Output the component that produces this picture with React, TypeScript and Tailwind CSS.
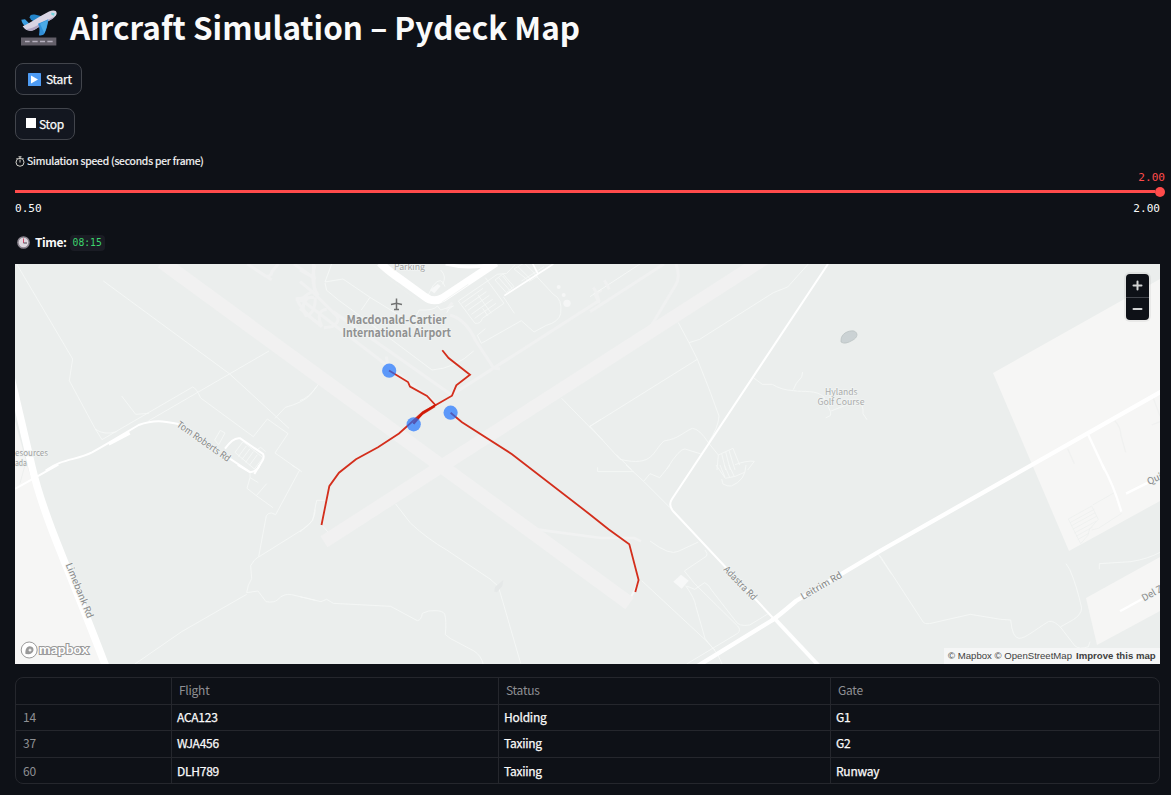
import React from "react";

const sans = "font-['Noto_Sans_CJK_JP','Noto_Sans',sans-serif]";
const mono = "font-['DejaVu_Sans_Mono','Liberation_Mono',monospace]";

function DepartureIcon() {
  return (
    <svg className="h-9 w-9 shrink-0" viewBox="0 0 108 105">
      <rect x="0" y="81" width="106" height="24" fill="#635f69" />
      <path d="M12 93h14M34 93h16M57 93h15M79 93h16" stroke="#b4aebd" strokeWidth="4" />
      <path d="M26 20c1-8 8-9 15-8l24 6-24 17-12-9z" fill="#2384c9" />
      <path d="M1 28l11-2 15 15-12 9C7 44 3 37 1 28z" fill="#3b9de0" />
      <path d="M5 47C25 39 64 12 84 3c10-4 23-5 23 5 0 9-12 16-22 22L43 56c-13 8-29 6-38-9z" fill="#d9d4e3" />
      <path d="M15 55c13 1 24-4 32-9L102 17c-4 6-10 9-17 13L43 56c-10 6-20 6-28-1z" fill="#b0a5c2" />
      <path d="M51 40l31-14c-1 14-6 33-12 44-3 5-13 6-16 4 2-12 3-22-3-34z" fill="#318fd8" />
      <path d="M57 40l24-12c-2 15-6 30-11 40z" fill="#4ba9e6" />
      <path d="M91 6l10 2-2 8-8-3z" fill="#70d2dc" />
    </svg>
  );
}

function ClockIcon() {
  return (
    <svg className="h-[13px] w-[13px] shrink-0" viewBox="0 0 26 26">
      <circle cx="13" cy="13" r="11.2" fill="#ddd8df" stroke="#8b858f" strokeWidth="3" />
      <path d="M13 5v9" stroke="#c9395b" strokeWidth="1.8" />
      <path d="M13 14h7" stroke="#4d4653" strokeWidth="2" />
    </svg>
  );
}

function StopwatchIcon() {
  return (
    <svg className="h-[11px] w-[10px] shrink-0" viewBox="0 0 20 22" fill="none" stroke="#e8e6df" strokeWidth="1.8">
      <circle cx="10" cy="12.5" r="8" />
      <path d="M7 1.5h6M10 2v3M3 4l2 2M17 4l-2 2M10 13V7" />
    </svg>
  );
}

function AirportMap() {
  const thin = { fill: "none", stroke: "#f6f8f7", strokeWidth: 2.6 };
  const taxi = { fill: "none", stroke: "#f0f1f1", strokeWidth: 9 };
  const fit = { lengthAdjust: "spacingAndGlyphs" as const };
  return (
    <svg className="block h-[400px] w-[1145px]" viewBox="15 264 1145 400">
      <rect x="15" y="264" width="1145" height="400" fill="#ebeeed" />
      <g fill="#f6f6f5">
        <path d="M15 421L29 472 47 522 67 574 104 664H15z" />
        <path d="M1160 279L993 373 1069 551 1160 501z" />
        <path d="M1160 557L1086 598 1097 645 1160 611z" />
      </g>

      <g transform="translate(15 260) scale(.333333)">
        <g {...thin}>
          <path d="M5 12L173 297 163 362 240 505 261 539 533 381Q544 384 557 414L715 530 757 477 819 521 780 579 860 635" />
          <path d="M265 63L643 341 822 505M762 273L400 483M320 408l42 55 40-3M240 507q28 20 65 8M780 475l31-33q52-14 75-37l25-33" />
          <path d="M599 540l17-29 14 8-19 35zM660 577l24-32 60 48-26 34zM670 590l24-32M681 598l24-32M692 607l23-32M703 616l24-32M725 570l12-8 15 13" />
        </g>
        <g {...taxi}>
          <path d="M697 12L752 48q15 4 20-15l18-21M753 48l17 12M837 12l65 45M900 15q-17 50 10 92M842 116l55-4M845 116q15 37 55 67l20 10M880 112q-27 25-7 55 28-5 28-55" />
        </g>
        <path d="M92 632c49-37 93-31 139-55 55-31 96-56 140-82 49-18 79-11 120-3M630 566q25-36 46-31l68 47q4 7 0 17L718 642M640 593l65 43" fill="none" stroke="#fff" strokeWidth="6" />
        <path d="M281 552l63-33" stroke="#fff" strokeWidth="10" />
      </g>

      <g transform="translate(300 260) scale(.333333)">
        <g {...taxi}>
          <path d="M40 12l3 80M0 30l40 22M43 95Q23 95 0 125M0 65l35 28L100 158q30 22-4 42L72 203M5 120L410 430M100 155L455 405M0 145l65 55q-20-48 15-52M260 290q-3 23 28 50M455 405L900 120M450 165q47 13 76 75l55 84 19 2M440 150l17-22M905 90l-20 12 9 20" />
        </g>
        <g {...thin}>
          <path d="M95 12L75 66 129 57 210 112 355 201M210 112l-26 38M75 69l5 22q33 29 76 59l240 180q70-5 125-57M340 180l18-30q45 2 54-12l10 12 38-12q-15 7-20 20M380 113l20-37q24-30 35 4M422 30q20 20 5 43" />
          <path d="M475 123l117-80 28-3 25-26M475 123l50 67q18 2 22-15l65-45-56-77M485 130l64-45M495 140l64-45M504 151l64-45M514 163l64-45M524 175l64-45M534 105l40 55M548 145l15 22M585 60l24-18 33 38-23 18zM596 53l33 38M608 48l28 36M642 27l31-18 40 40-25 15zM654 20l40 40M665 63l67-43M610 110l33 50M704 43l56 60q28 13 22 58-6 25-43 35l-37 20-38-34-120 68-12-24 24-20M785 415l83 85 35-22M868 500l40 40M0 422q25-8 50-42" />
        </g>
        <circle cx="776" cy="81" r="6" fill="#f5f6f6" /><circle cx="791" cy="105" r="6" fill="#f5f6f6" /><circle cx="801" cy="130" r="11" fill="#f5f6f6" />
        <path d="M390 90l23-18 9 6-19 22z" fill="#f7f8f8" />
        <g fill="none" stroke="#fff">
          <path d="M240 8q21 22 58 47l75 54q27 21 55 5L588 8" strokeWidth="24" />
          <path d="M437 12q72 18 150-2" strokeWidth="10" />
          <path d="M613 107L760 12M690 -5l23 45" strokeWidth="5" />
        </g>
        <path d="M250 45l105 78M425 127l80-54" stroke="#edf0ef" strokeWidth="2" />
      </g>

      <g transform="translate(590 260) scale(.333333)">
        <g {...thin}>
          <path d="M0 110L150 12M265 188l32 60 32-10L550 98l43-17 62-69M297 248l25 50q37 90 65 170-2 35-32 80-27-42-48-43c-32 14-38 30-85 38-35 30-30 79-132 55L0 499 322 298M80 585l45 44M230 627q40-63 55-60l48 15M355 548l30 37 44-20 20 50M385 585l-4 45M395 581l12 49M407 576l14 54M417 571l18 59M435 614q35-13 58-10l-20 26" />
          <path d="M490 353l27 20h30q26 17 64 19c30 5 67-3 90 18l20 44 80-32q21 11 18 39l12 18M610 389q5-18 25-38l3-15M722 455v11l-15 8" />
        </g>
        <g {...taxi}><path d="M0 155L222 12M258 12q15 40-3 66L182 200M25 130q3-20-15-48M43 61l15 27" /></g>
      </g>

      <g transform="translate(15 465) scale(.333333)">
        <g {...thin}>
          <path d="M705 25v13l25 15M705 38l-9 32 28 22 50 36M724 92l31-36M830 0l24 15-72 134-12-5q-10-1-16 8L731 275q-14 8-24 27l3 39q-12 18-15 42l34-5 24 32q25 4 35-6 18-20 42-15l72 17M695 388L500 500 360 597M731 276L865 192q34-21 36-58" />
        </g>
        <path d="M668 0l37 22q22-3 29-22M0 72l130-73" fill="none" stroke="#fff" strokeWidth="6" />
        <path d="M15 55l15-55" stroke="#e9ebea" strokeWidth="2" />
      </g>

      <g transform="translate(300 465) scale(.333333)">
        <g {...thin}>
          <path d="M287 117l45 58q51 47 108 80l130 87 25 22 67 231M0 201l38-34q5-26 12-61h25M0 395l63 15 17-7 20 12 172 9 80 43q12-1 15-22 19-10 38-8 23 0 29 10 6 20 2 62l16 12 70 37q22 14 28 41M65 180l20 22" />
          <path d="M688 190l65 9 150 20h100l20 10" stroke="#f1f2f2" strokeWidth="8" />
        </g>
        <path d="M583 380l2-14 25-21-3 18-16 19z" fill="#e5e8e8" />
      </g>

      <g transform="translate(590 465) scale(.333333)">
        <g {...thin}>
          <path d="M23 7v13h108M108 0l54 50 78 78M162 48l18-22 29 12 31-38M180 228q60 45 85 31l60-28M345 255q9 11 5 18l-67 45 30 37q75 74 130 128 11 12 0 22L290 597M155 347L355 533l28 35 13 29M287 362q28 40 30 60l28 98q8 15 30 35M290 363l24 10 30-20q12 5 22 24l70 90q10 19 43 13 32-19 57-35M378 0l28 40q30-3 58-18M390 0l15 37M403 0l16 37M417 0l15 33M395 42l4 15q15 8 25 6 43-17 44-63M865 268l40 60" />
          <path d="M117 408l28-55" strokeWidth="6" />
        </g>
        <path d="M250 350l23-21 23 18-21 24z" fill="#f7f8f8" />
      </g>

      <g transform="translate(880 465) scale(.333333)">
        <path {...thin} d="M0 272L130 472q5 6 18 4l123-28 91 15 30 2q5 54 25 55c20 0 45-24 88-50 12-4 24 5 36 16l44 57q14 12 40 2l5-15M541 486l39-22q24-15 25-35-15-68-36-116l-11-17M658 313v-17l95-6q53-9 87-28" />
        <g fill="none" stroke="#eceeed" strokeWidth="2">
          <path d="M565 162l70-39 20 40-26 29-6 20-21 24zM638 120l65-37M725 145l-70 45-20 5M570 173l73-40M573 183l73-40M578 193l73-40M583 204l65-35M588 214l50-28M593 224l35-20" />
        </g>
        <path d="M667 0q34 60 57 140M738 86l66-33M720 439l72-40" fill="none" stroke="#fff" strokeWidth="7" />
      </g>

      <g transform="translate(880 160) scale(.333333)" fill="none">
        <path d="M563 866l20 45M704 782q18 17 19 45l14 50M820 715l20 53M815 795l25-10" stroke="#f0f1f0" strokeWidth="4" />
        <path d="M624 823l50 107" stroke="#fff" strokeWidth="7" />
      </g>

      <path d="M165 264L629.5 603.5M162 261.8l6 4.4" stroke="#f1f1f1" strokeWidth="14" />
      <path d="M324 541.7L765 258.4" stroke="#f1f1f1" strokeWidth="13" />

      <g fill="none" stroke="#fff">
        <path d="M10 373L32 467q6 26 20 63c17 44 34 84 54 137" strokeWidth="7.5" />
        <path d="M828 264L672 499q-4 6 1 12L774 619" strokeWidth="2" />
        <path d="M775 619l44 47" strokeWidth="4" />
        <path d="M696 667L771 621q5-3 25-20 12-7 84-50L1163 390.5" strokeWidth="4.3" />
      </g>

      <path d="M841 340c0-6 7-10 13-9 5 2 3 7-1 9q-8 5-12 2z" fill="#cbd2d4" stroke="#b8c0c0" strokeWidth=".7" />

      <g className={sans} fill="#929292" stroke="#f1f4f3" strokeWidth="1.6" paintOrder="stroke" fontSize="8.8">
        <text {...fit} x="394" y="270" textLength="31" fill="#a5a6a6">Parking</text>
        <g fontSize="11.6" fontWeight="700" fill="#909191">
          <text {...fit} x="346.5" y="323.6" textLength="100">Macdonald-Cartier</text>
          <text {...fit} x="342.5" y="336.6" textLength="108.5">International Airport</text>
        </g>
        <text {...fit} x="825" y="394.8" textLength="32.5" fill="#abacac">Hylands</text>
        <text {...fit} x="817.5" y="404.8" textLength="47" fill="#abacac">Golf Course</text>
        <text {...fit} x="15" y="456" textLength="33" fill="#a0a1a1">esources</text>
        <text {...fit} x="15" y="465.5" textLength="12" fill="#a0a1a1">ada</text>
        <g fill="#868787" fontSize="9.4">
          <text {...fit} transform="translate(176 426) rotate(35)" textLength="63">Tom Roberts Rd</text>
          <text {...fit} transform="translate(65.5 564.5) rotate(68)" textLength="58.5">Limebank Rd</text>
          <text {...fit} transform="translate(723 570) rotate(46)" textLength="43">Adastra Rd</text>
          <text {...fit} transform="translate(803 600) rotate(-30)" textLength="46">Leitrim Rd</text>
          <text transform="translate(1149 485) rotate(-25)">Qui</text>
          <text transform="translate(1144 601.5) rotate(-29)">Del Z</text>
        </g>
      </g>
      <path d="M396.5 298.5v11M391 304.5l5.5-1.2 5.5 1.2M394 309.5h5" fill="none" stroke="#717272" strokeWidth="1.5" />

      <g fill="none" stroke="#d01804" strokeOpacity=".9" strokeWidth="1.8">
        <path d="M389 370.5L408 382l2 4.5 17 9.5 8.3 9-12.6 8-9 11" />
        <path d="M442.3 350.3l6.3 7.7 21.4 16.7-13.7 10.6-4.3 10.4-14 8-15 8.3L399 433.5 378 447.3l-22 11.9-17 13.5-9.7 13.5-7.8 38.8" />
        <path d="M435 406.3l-13 8-9 9" />
        <path d="M450.6 412.7l11.4 9.5 50 32 77 59.5 19.5 15.5 20.8 15 9.3 35.8-3.3 12" />
      </g>
      <g fill="#176eff" fillOpacity=".68">
        <circle cx="389.2" cy="370.7" r="7.1" /><circle cx="413.7" cy="424.3" r="7.1" /><circle cx="450.6" cy="412.7" r="7.1" />
      </g>

      <g fill="#fff" stroke="#999" strokeWidth="1">
        <circle cx="29.2" cy="650" r="8" />
        <path d="M25.5 654c-.5-4 1-8 4.4-7.8 5.5.3 4.5 7.5-1 8z" fill="#999" stroke="none" />
        <path d="M30 648l.6 1.5 1.5.6-1.5.6-.6 1.5-.6-1.5-1.5-.6 1.5-.6z" stroke="none" />
        <text x="39" y="654" textLength="49.5" lengthAdjust="spacingAndGlyphs" fontSize="13" fontWeight="700" fontFamily="Lato, sans-serif" paintOrder="stroke" strokeWidth="2">mapbox</text>
      </g>
    </svg>
  );
}

const rows = [
  ["14", "ACA123", "Holding", "G1"],
  ["37", "WJA456", "Taxiing", "G2"],
  ["60", "DLH789", "Taxiing", "Runway"],
];

export default function App() {
  return (
    <main className={`h-[795px] w-[1171px] overflow-hidden bg-[#0e1117] pl-[15px] text-[#fafafa] ${sans}`}>
      <h1 className="flex h-[63px] items-start pl-1.5 pt-2.5 text-[31.45px] font-bold leading-9">
        <DepartureIcon />
        <span className="ml-[13px] -mt-px whitespace-nowrap">Aircraft Simulation – Pydeck Map</span>
      </h1>
      <div className="flex h-[89px] flex-col items-start gap-[13px] text-[12px] leading-4 tracking-[-0.25px] [-webkit-text-stroke:0.25px]">
        <button className="flex h-8 w-[67px] items-center rounded-lg border border-[#42454c] bg-[#131720] pl-3">
          <svg className="h-[13px] w-[13px]" viewBox="0 0 26 26"><rect width="26" height="26" fill="#4e9bf3" rx="1" /><path d="M6 5l14 8-14 8z" fill="#fff" /></svg>
          <span className="ml-[5px]">Start</span>
        </button>
        <button className="flex h-8 w-[60px] items-center rounded-lg border border-[#42454c] bg-[#131720] pb-px pl-2.5">
          <span className="-mt-px h-2.5 w-2.5 bg-white" />
          <span className="ml-[3px]">Stop</span>
        </button>
      </div>
      <div className="flex h-[18px] items-center gap-0.5 text-[10.4px] tracking-[-0.17px] [-webkit-text-stroke:0.2px]"><StopwatchIcon /><span>Simulation speed (seconds per frame)</span></div>
      <div className={`h-[63px] w-[1150px] text-[11.1px] leading-4 ${mono}`}>
        <div className="text-right text-[#ff4b4b]">2.00</div>
        <div className="flex h-[11px] items-center">
          <div className="h-[3px] w-[1140px] bg-[#ff4b4b]" />
          <div className="h-2.5 w-2.5 rounded-full bg-[#ff4b4b]" />
        </div>
        <div className="mt-1 flex w-[1145px] justify-between"><span>0.50</span><span>2.00</span></div>
      </div>
      <div className="flex h-[31px] items-start pl-0.5 text-[12px] leading-4">
        <div className="flex items-center"><ClockIcon /><b className="ml-[5px] tracking-[-0.4px]">Time:</b><code className={`ml-[3px] mt-0.5 rounded bg-[#1a1c24] px-[3px] text-[9.7px] text-[#3dd56d] ${mono}`}>08:15</code></div>
      </div>
      <section className="relative h-[400px] w-[1145px]">
        <AirportMap />
        <div className="absolute right-[11px] top-2.5 h-[46px] w-[23px] rounded bg-[#0e1117] shadow-[0_0_0_2px_rgba(0,0,0,.05)]">
          <svg className="h-[46px] w-[23px]" viewBox="0 0 23 46"><path d="M0 23.5h23" stroke="#42454c" /><path d="M7.5 11.5h8M11.5 7.5v8M7.5 35h8" stroke="#d2d3d4" strokeWidth="2" strokeLinecap="round" /></svg>
        </div>
        <div className="absolute bottom-0 right-0 flex h-4 w-[216px] items-center gap-1 whitespace-nowrap bg-[#f5f6f6] pl-1 font-['Liberation_Sans',Arial,sans-serif] text-[9.6px] text-[#404040]"><span>© Mapbox © OpenStreetMap</span><b className="tracking-[0.02px]">Improve this map</b></div>
      </section>
      <table className="mt-[13px] w-[1145px] table-fixed border-separate border-spacing-0 overflow-hidden rounded-lg border border-[#25272d] text-[12px] leading-4 tracking-[-0.25px]">
        <colgroup><col className="w-[156px]" /><col className="w-[327px]" /><col className="w-[332px]" /><col /></colgroup>
        <thead><tr className="h-[27px] text-left text-[#8e9094]"><th className="border-r border-b border-[#25272d]" /><th className="border-r border-b border-[#25272d] p-0 pb-0.5 pl-[7px] font-normal">Flight</th><th className="border-r border-b border-[#25272d] p-0 pb-0.5 pl-[7px] font-normal">Status</th><th className="border-b border-[#25272d] p-0 pb-0.5 pl-[7px] font-normal">Gate</th></tr></thead>
        <tbody>
          {rows.map((row, i) => (
            <tr key={row[0]} className={i === 1 ? "h-[27px]" : i === 2 ? "h-[25px]" : "h-[26px]"}>
              {row.map((cell, j) => (
                <td key={j} className={`border-[#25272d] p-0 ${i === 2 ? "pb-0" : "pb-0.5"} ${j < 3 ? "border-r" : ""} ${i < 2 ? "border-b" : ""} ${j === 0 ? "pl-[7px] text-[#8e9094]" : "pl-[5px] [-webkit-text-stroke:0.25px]"}`}>{cell}</td>
              ))}
            </tr>
          ))}
        </tbody>
      </table>
    </main>
  );
}
